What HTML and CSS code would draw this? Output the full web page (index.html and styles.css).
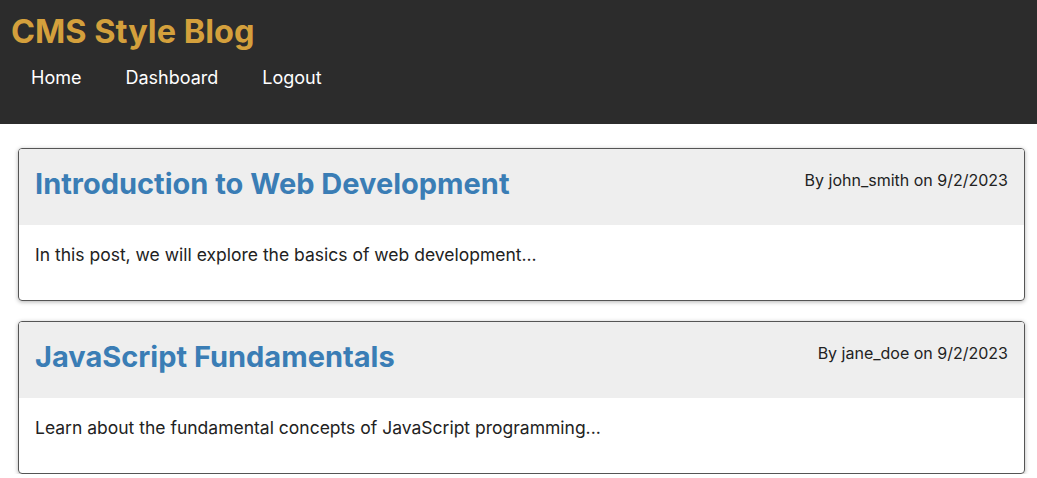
FILE: index.html
```html
<!DOCTYPE html>
<html>
<head>
<meta charset="utf-8">
<link rel="stylesheet" href="styles.css">
</head>
<body>
<header class="site-header">
  <h1 class="site-title">CMS Style Blog</h1>
  <nav class="nav">
    <a href="#">Home</a>
    <a href="#">Dashboard</a>
    <a href="#">Logout</a>
  </nav>
</header>
<main class="posts">
  <article class="post">
    <div class="post-head">
      <h2 class="post-title">Introduction to Web Development</h2>
      <span class="post-meta">By john_smith on 9/2/2023</span>
    </div>
    <div class="post-body">
      <p>In this post, we will explore the basics of web development...</p>
    </div>
  </article>
  <article class="post">
    <div class="post-head">
      <h2 class="post-title">JavaScript Fundamentals</h2>
      <span class="post-meta">By jane_doe on 9/2/2023</span>
    </div>
    <div class="post-body">
      <p>Learn about the fundamental concepts of JavaScript programming...</p>
    </div>
  </article>
</main>
</body>
</html>
```
FILE: styles.css
```css
* { box-sizing: border-box; }
body {
  margin: 0;
  font-family: Inter, "Noto Sans", sans-serif;
  color: #222;
  background: #fff;
}
.site-header {
  background: #2c2c2c;
  height: 124px;
  padding: 12px 11px 0;
}
.site-title {
  margin: 0;
  font-size: 32.5px;
  font-weight: 700;
  color: #d4a03c;
  line-height: 40px;
}
.nav {
  display: flex;
  gap: 44px;
  padding-left: 20px;
  margin-top: 14px;
}
.nav a {
  color: #fff;
  text-decoration: none;
  font-size: 18px;
  line-height: 24px;
}
.posts {
  padding: 24px 12px 0 18px;
  display: flex;
  flex-direction: column;
  gap: 20px;
}
.post {
  border: 1px solid #555;
  border-radius: 4px;
  box-shadow: 0 1px 4px rgba(0,0,0,0.3);
  overflow: hidden;
}
.post-head {
  background: #eeeeee;
  display: flex;
  justify-content: space-between;
  align-items: flex-start;
  padding: 17px 16px 18px 16px;
  height: 76px;
}
.post-title {
  margin: 0;
  font-size: 29px;
  font-weight: 700;
  color: #3a7db5;
  line-height: 36px;
}
.post-meta {
  font-size: 16px;
  margin-top: 3px;
  line-height: 22px;
}
.post-body {
  padding: 18px 16px 22px;
  height: 75px;
}
.post-body p {
  margin: 0;
  font-size: 17.5px;
  line-height: 24px;
}
```
